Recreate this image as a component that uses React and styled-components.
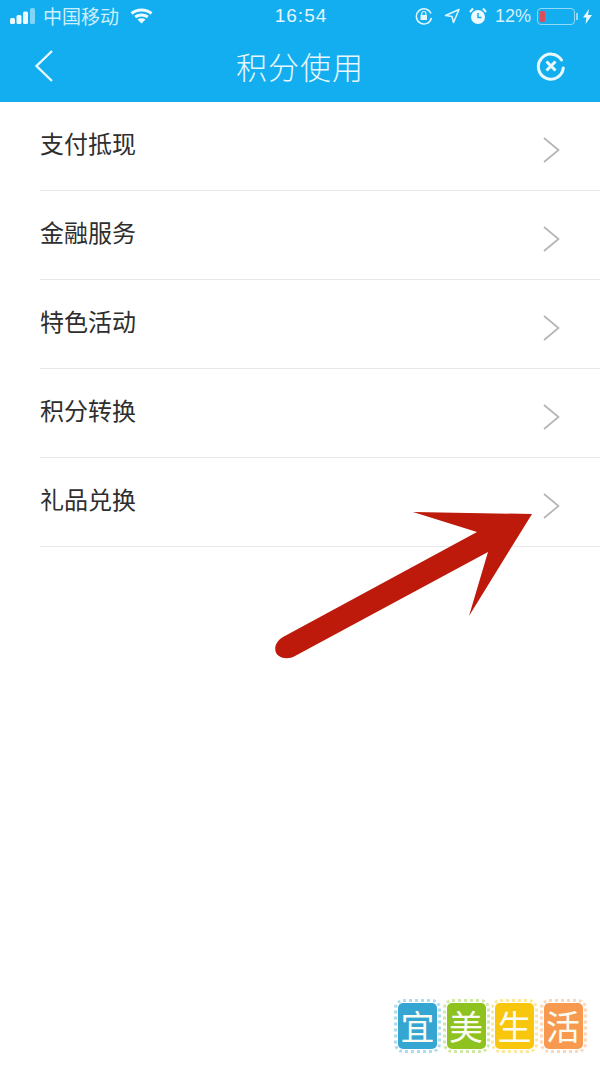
import React from "react";
import styled, { createGlobalStyle } from "styled-components";

const Global = createGlobalStyle`
  html, body { margin: 0; padding: 0; background: #fff; }
  #root { width: 600px; height: 1067px; }
`;
const CJK = `"Noto Sans CJK SC", "Noto Sans", sans-serif`;

const Page = styled.div`
  position: relative; width: 600px; height: 1067px; overflow: hidden;
  background: #fff; font-family: ${CJK};
`;
const Header = styled.header`
  height: 102px; background: #12aeef; color: #e6f7fe;
  display: flex; flex-direction: column; box-sizing: border-box;
`;
const StatusBar = styled.div`
  height: 34px; display: grid; grid-template-columns: 1fr auto 1fr; align-items: center;
  padding: 0 8px 2px 10px; box-sizing: border-box;
`;
const StatusLeft = styled.div`display: flex; align-items: center; gap: 8px;`;
const Carrier = styled.span`font-size: 19px; line-height: 24px; color: #cdeefc; margin-right: 3px;`;
const Clock = styled.span`
  font-family: "Liberation Sans", sans-serif; font-size: 19px; letter-spacing: 1px; color: #e3f6fe;
`;
const StatusRight = styled.div`display: flex; align-items: center; justify-content: flex-end; gap: 0;`;
const Percent = styled.span`
  font-family: "Liberation Sans", sans-serif; font-size: 18px; color: #d4f0fc; margin: 0 6px 0 8px;
`;
const Battery = styled.div`
  position: relative; width: 38px; height: 17px; box-sizing: border-box;
  border: 1px solid #92d9f7; border-radius: 4px; padding: 2px; display: flex;
`;
const BatteryFill = styled.div`width: 5px; background: #d9505c; border-radius: 1px;`;
const NavBar = styled.div`
  flex: 1; display: grid; grid-template-columns: 1fr auto 1fr; align-items: center; padding: 0 34px 4px;
`;
const Title = styled.h1`
  margin: 0; font-size: 31px; font-weight: 300; letter-spacing: 1px; color: #e8f8fe; line-height: 40px;
`;
const NavEnd = styled.div`display: flex; justify-content: flex-end;`;
const List = styled.ul`list-style: none; margin: 0; padding: 0 0 0 40px;`;
const Row = styled.li`
  height: 89px; box-sizing: border-box; border-bottom: 1px solid #e8e8e8;
  display: flex; justify-content: space-between; padding: 23px 40px 0 0;
`;
const Label = styled.span`font-size: 24px; line-height: 36px; color: #2e2e2e;`;
const Chevron = styled.svg`margin-top: 12px;`;
const ArrowOverlay = styled.svg`position: absolute; left: 0; top: 0; pointer-events: none;`;
const Watermark = styled.div`
  position: absolute; left: 398px; top: 1003px; display: flex; gap: 9.5px;
`;
const Tile = styled.div`
  width: 39px; height: 46px; border-radius: 5px; background: ${p => p.$c};
  outline: 3px dotted ${p => p.$c}66; outline-offset: 1px;
  display: flex; align-items: center; justify-content: center;
  color: #fbfbf2; font-size: 34px; font-weight: 400; line-height: 1;
`;

const items = ["支付抵现", "金融服务", "特色活动", "积分转换", "礼品兑换"];
const tiles = [["宜", "#35a5d2"], ["美", "#8dc21f"], ["生", "#f8c60c"], ["活", "#f79a50"]];

export default function App() {
  return (
    <Page>
      <Global />
      <Header>
        <StatusBar>
          <StatusLeft>
            <svg width="25" height="16" viewBox="0 0 25 16">
              <rect x="0" y="10" width="5" height="6" rx="1.500" fill="#eefaff" />
              <rect x="6.500" y="7" width="5" height="9" rx="1.500" fill="#eefaff" />
              <rect x="13" y="3.500" width="5" height="12.500" rx="1.500" fill="#eefaff" />
              <rect x="20" y="0" width="5" height="16" rx="1.500" fill="#7fd4f7" />
            </svg>
            <Carrier>中国移动</Carrier>
            <svg width="23" height="16" viewBox="0 0 23 16" fill="none" stroke="#eefaff" strokeWidth="3">
              <path d="M1.500 5.500C7 .8 16 .8 21.500 5.500" />
              <path d="M5.200 9C8.700 6.300 14.300 6.300 17.800 9" />
              <path d="M11.500 15.500 7.500 11.500c2.300-1.600 5.700-1.600 8 0z" fill="#eefaff" stroke="none" />
            </svg>
          </StatusLeft>
          <Clock>16:54</Clock>
          <StatusRight>
            <svg width="18" height="18" viewBox="0 0 18 18" fill="none" stroke="#e3f6fe" strokeWidth="1.500">
              <path d="M16 6.500A7.600 7.600 0 1 0 16.400 11" />
              <rect x="5.500" y="8" width="6.500" height="5" fill="#e3f6fe" stroke="none" />
              <path d="M6.800 8V6.500a2 2 0 0 1 4 0V8" strokeWidth="1.200" />
            </svg>
            <svg width="16" height="16" viewBox="0 0 16 16" fill="none" stroke="#e3f6fe" strokeWidth="1.500" style={{ margin: "0 9px 0 11px" }}>
              <path d="M15 1.500 1.500 7.500 8 8.500 9.500 14.500z" strokeLinejoin="round" />
            </svg>
            <svg width="18" height="18" viewBox="0 0 18 18">
              <circle cx="9" cy="10" r="7" fill="#eefaff" />
              <path d="M9 6v4.500h3.500" fill="none" stroke="#12aeef" strokeWidth="1.500" />
              <path d="M1 5l3-3.500M17 5l-3-3.500" stroke="#eefaff" strokeWidth="2" />
            </svg>
            <Percent>12%</Percent>
            <Battery><BatteryFill /></Battery>
            <svg width="3" height="7" viewBox="0 0 3 7" style={{ marginLeft: 1 }}><rect width="2" height="7" fill="#92d9f7" /></svg>
            <svg width="9" height="15" viewBox="0 0 9 15" style={{ marginLeft: 4 }}>
              <path d="M6 0 0 8.500h3.500L2.500 15 9 6H5z" fill="#eefaff" />
            </svg>
          </StatusRight>
        </StatusBar>
        <NavBar>
          <svg width="20" height="32" viewBox="0 0 20 32" fill="none" stroke="#e8f8fe" strokeWidth="2.400">
            <path d="M18 1 2.500 16 18 31" />
          </svg>
          <Title>积分使用</Title>
          <NavEnd>
            <svg width="30" height="30" viewBox="0 0 30 30" fill="none" stroke="#e8f8fe" strokeWidth="3">
              <path d="M25.500 9A12.500 12.500 0 1 0 27.300 17" strokeLinecap="round" />
              <path d="M10.500 10.500l9 9M19.500 10.500l-9 9" />
            </svg>
          </NavEnd>
        </NavBar>
      </Header>
      <List>
        {items.map((t) => (
          <Row key={t}>
            <Label>{t}</Label>
            <Chevron width="17" height="26" viewBox="0 0 17 26" fill="none" stroke="#b5b5b5" strokeWidth="1.700">
              <path d="M1 1l14.500 12L1 25" />
            </Chevron>
          </Row>
        ))}
      </List>
      <ArrowOverlay width="600" height="1067" viewBox="0 0 600 1067">
        <path
          d="M532 514 413 512 477 532 283 637C274 642 273 652 279 656C283 659 290 659 295 656L488 552 469 616Z"
          fill="#bd1a0b"
        />
      </ArrowOverlay>
      <Watermark>
        {tiles.map(([ch, c]) => (
          <Tile key={ch} $c={c}>{ch}</Tile>
        ))}
      </Watermark>
    </Page>
  );
}
